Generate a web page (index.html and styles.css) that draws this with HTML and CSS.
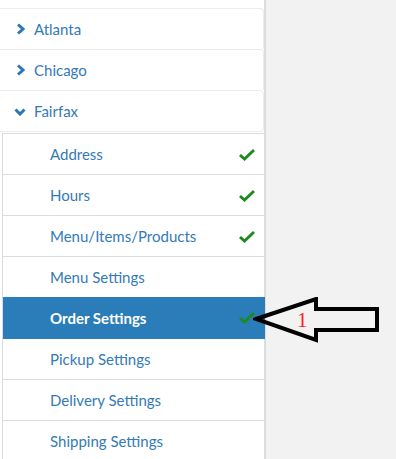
FILE: index.html
```html
<!DOCTYPE html>
<html lang="en">
<head>
  <meta charset="UTF-8">
  <title>Locations</title>
  <link rel="stylesheet" href="styles.css">
</head>
<body>
  <div class="sidebar">
    <div class="panel">
      <svg class="chev" width="8" height="12" viewBox="0 0 8 12"><path d="M1 1.5 L6 6 L1 10.5" fill="none" stroke="#2b77b6" stroke-width="3"/></svg>
      <span>Atlanta</span>
    </div>
    <div class="panel">
      <svg class="chev" width="8" height="12" viewBox="0 0 8 12"><path d="M1 1.5 L6 6 L1 10.5" fill="none" stroke="#2b77b6" stroke-width="3"/></svg>
      <span>Chicago</span>
    </div>
    <div class="panel open">
      <svg class="chev down" width="12" height="8" viewBox="0 0 12 8"><path d="M1.5 1.5 L6 6 L10.5 1.5" fill="none" stroke="#2b77b6" stroke-width="3"/></svg>
      <span>Fairfax</span>
    </div>
    <ul class="sublist">
      <li>Address <svg class="check" width="16" height="13" viewBox="0 0 16 13"><path d="M1 7 L5.5 11 L15 2" fill="none" stroke="#1d8a21" stroke-width="3"/></svg></li>
      <li>Hours <svg class="check" width="16" height="13" viewBox="0 0 16 13"><path d="M1 7 L5.5 11 L15 2" fill="none" stroke="#1d8a21" stroke-width="3"/></svg></li>
      <li>Menu/Items/Products <svg class="check" width="16" height="13" viewBox="0 0 16 13"><path d="M1 7 L5.5 11 L15 2" fill="none" stroke="#1d8a21" stroke-width="3"/></svg></li>
      <li>Menu Settings</li>
      <li class="active">Order Settings <svg class="check" width="16" height="13" viewBox="0 0 16 13"><path d="M1 7 L5.5 11 L15 2" fill="none" stroke="#1d8a21" stroke-width="3"/></svg></li>
      <li>Pickup Settings</li>
      <li>Delivery Settings</li>
      <li>Shipping Settings</li>
    </ul>
  </div>
  <div class="content"></div>

  <svg class="pointer" width="130" height="50" viewBox="0 0 130 50">
    <path d="M3 22 L63 2 L63 12 L124 12 L124 33 L63 33 L63 43 Z" fill="none" stroke="#000" stroke-width="4" stroke-linejoin="miter"/>
    <text x="44" y="30" class="num">1</text>
  </svg>
</body>
</html>
```

FILE: styles.css
```css
body {
  margin: 0;
  display: flex;
  height: 100vh;
  overflow: hidden;
  font-family: "Lato", "Liberation Sans", sans-serif;
  font-size: 15px;
  color: #337ab7;
}
.sidebar {
  width: 266px;
  flex-shrink: 0;
  border-right: 2px solid #dcdcdc;
  padding-top: 8px;
  background: #fff;
  box-sizing: border-box;
}
.content {
  flex-grow: 1;
  background: #f2f2f2;
}
.panel {
  margin-left: -4px;
  height: 41px;
  box-sizing: border-box;
  border: 1px solid #ececec;
  border-bottom: none;
  border-radius: 0 4px 0 0;
  display: flex;
  align-items: center;
  padding-left: 20px;
  gap: 9px;
}
.panel.open {
  height: 42px;
  border-bottom: 1px solid #ececec;
  border-radius: 0 4px 4px 0;
  padding-left: 17px;
  gap: 8px;
}
.chev.down {
  margin-top: 1px;
}
.sublist {
  list-style: none;
  margin: 1px 0 0 2px;
  padding: 0;
  width: 262px;
  border: 1px solid #dcdcdc;
  border-bottom: none;
}
.sublist li {
  height: 41px;
  box-sizing: border-box;
  border-bottom: 1px solid #dcdcdc;
  display: flex;
  align-items: center;
  justify-content: space-between;
  padding: 0 10px 0 47px;
}
.sublist li.active {
  background: #2a7db8;
  color: #fff;
  font-weight: bold;
  border-bottom-color: #2a7db8;
  margin-top: -1px;
  height: 42px;
}
.check {
  flex-shrink: 0;
}
.pointer {
  position: absolute;
  left: 253px;
  top: 297px;
}
.num {
  font-family: "Liberation Serif", serif;
  font-size: 21px;
  fill: #ff1a1a;
}
```
